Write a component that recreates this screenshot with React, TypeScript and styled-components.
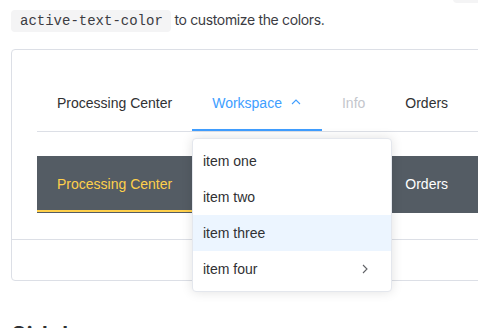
import React from "react";
import styled, { createGlobalStyle } from "styled-components";

const GlobalStyle = createGlobalStyle`
  html, body {
    margin: 0;
    padding: 0;
    background: #fff;
    overflow: hidden;
  }
  body {
    font-family: Inter, "Liberation Sans", Arial, sans-serif;
    color: #3c3c43;
  }
`;

const Page = styled.div`
  width: 700px;
  padding-left: 11px;
`;

const Intro = styled.p`
  margin: -23px 0 14px;
  font-size: 14px;
  line-height: 28px;
  letter-spacing: -0.35px;
  color: #3c3c43;
`;

const Code = styled.code`
  font-family: "Liberation Mono", "DejaVu Sans Mono", monospace;
  font-size: 14px;
  letter-spacing: 0;
  white-space: nowrap;
  color: #3c3c43;
  background: #f4f4f5;
  border-radius: 4px;
  padding: 3px 8px 3px 9px;
`;

const DemoBlock = styled.div`
  border: 1px solid #dcdfe6;
  border-radius: 4px;
`;

const DemoSource = styled.div`
  padding: 25px 24px 26px 25px;
  display: flex;
  flex-direction: column;
  gap: 24px;
`;

const Menu = styled.nav<{ $dark?: boolean }>`
  position: relative;
  display: flex;
  height: 56px;
  background: ${(p) => (p.$dark ? "#545c64" : "#fff")};
  border-bottom: 1px solid ${(p) => (p.$dark ? "#545c64" : "#dcdfe6")};
  font-family: "Liberation Sans", Helvetica, Arial, sans-serif;
  font-size: 14px;
`;

const MenuItem = styled.div<{ $color: string; $active?: string; $sub?: boolean }>`
  position: relative;
  box-sizing: border-box;
  height: 56px;
  line-height: 56px;
  padding: 0 ${(p) => (p.$sub ? "40px" : "20px")} 0 20px;
  color: ${(p) => p.$color};
  white-space: nowrap;
  border-bottom: 2px solid ${(p) => p.$active || "transparent"};
`;

const Arrow = styled.svg`
  position: absolute;
  right: 20px;
  top: 50%;
  margin-top: -6px;
  width: 12px;
  height: 12px;
`;

const Popup = styled.div`
  position: absolute;
  top: 63px;
  left: 155px;
  width: 200px;
  box-sizing: border-box;
  padding: 4px 0;
  background: #fff;
  border: 1px solid #e4e7ed;
  border-radius: 4px;
  box-shadow: 0 0 12px rgba(0, 0, 0, 0.12);
  z-index: 5;
`;

const PopupItem = styled.div<{ $hover?: boolean }>`
  position: relative;
  height: 36px;
  line-height: 36px;
  padding: 0 10px;
  color: #303133;
  background: ${(p) => (p.$hover ? "#ecf5ff" : "#fff")};
`;

const SourceToggle = styled.div`
  height: 40px;
  border-top: 1px solid #dcdfe6;
`;

const Heading = styled.h2`
  margin: 39px 0 0;
  font-size: 24px;
  line-height: 32px;
  font-weight: 600;
  color: #303133;
`;

const Chevron = ({ dir, color }: { dir: "up" | "right"; color: string }) => (
  <Arrow viewBox="0 0 12 12">
    <polyline
      points={dir === "up" ? "2,8 6,4 10,8" : "4,2 8,6 4,10"}
      fill="none"
      stroke={color}
      strokeWidth="1.1"
    />
  </Arrow>
);

const items = ["item one", "item two", "item three", "item four"];

export default function App() {
  return (
    <Page>
      <GlobalStyle />
      <Intro>
        Menu on top bar can be set horizontal by the mode prop and provides{" "}
        <Code>background-color</Code>
        <br />
        <Code>active-text-color</Code> to customize the colors.
      </Intro>

      <DemoBlock>
        <DemoSource>
          <Menu>
            <MenuItem $color="#303133">Processing Center</MenuItem>
            <MenuItem $color="#409eff" $active="#409eff" $sub>
              Workspace
              <Chevron dir="up" color="#409eff" />
            </MenuItem>
            <MenuItem $color="#c4c6cc">Info</MenuItem>
            <MenuItem $color="#303133">Orders</MenuItem>

            <Popup>
              {items.map((label, i) => (
                <PopupItem key={label} $hover={i === 2}>
                  {label}
                  {i === 3 && <Chevron dir="right" color="#606266" />}
                </PopupItem>
              ))}
            </Popup>
          </Menu>

          <Menu $dark>
            <MenuItem $color="#ffd04b" $active="#ffd04b">
              Processing Center
            </MenuItem>
            <MenuItem $color="#fff" $sub>
              Workspace
              <Chevron dir="up" color="#fff" />
            </MenuItem>
            <MenuItem $color="#aaaeb2">Info</MenuItem>
            <MenuItem $color="#fff">Orders</MenuItem>
          </Menu>
        </DemoSource>
        <SourceToggle />
      </DemoBlock>

      <Heading>Sidebar</Heading>
    </Page>
  );
}
